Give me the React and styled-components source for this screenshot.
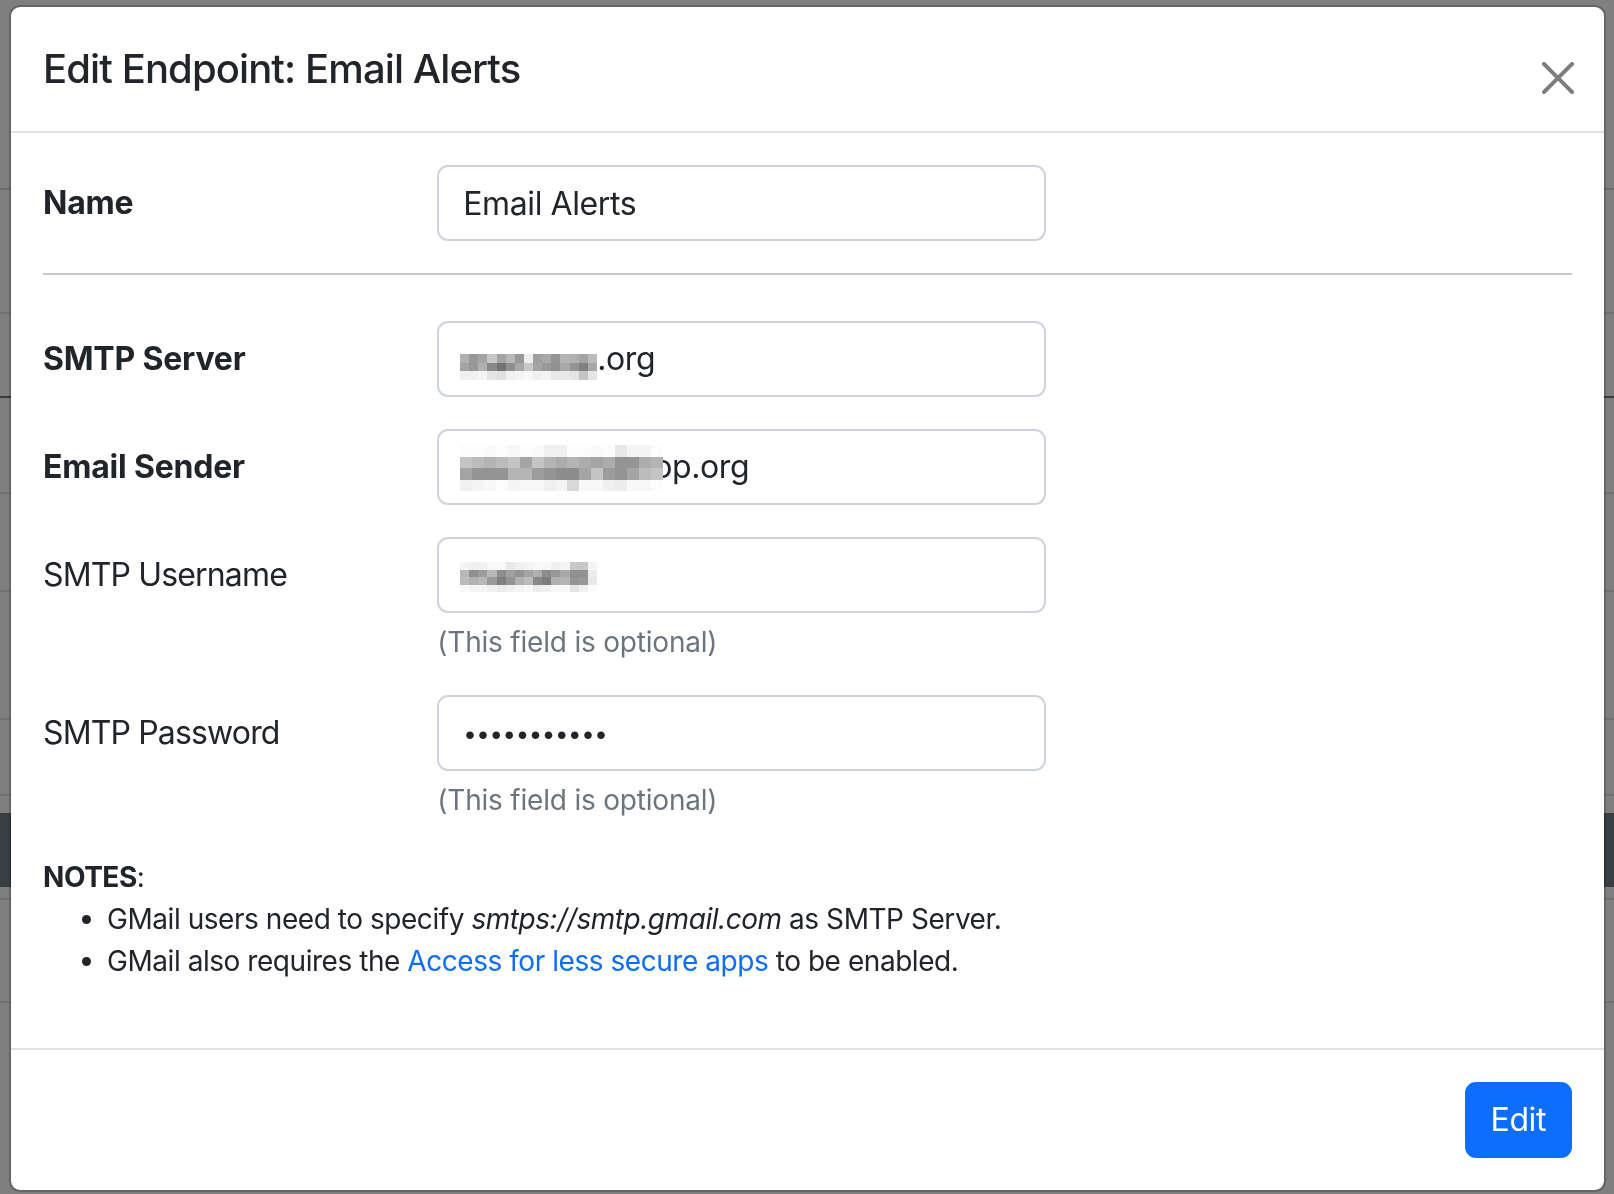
import React from "react";
import styled, { createGlobalStyle, css } from "styled-components";

const GlobalStyle = createGlobalStyle`
  * { box-sizing: border-box; }
  html, body { margin: 0; padding: 0; }
  body {
    font-family: Inter, "Noto Sans", "Liberation Sans", sans-serif;
    color: #212529;
    background: #fff;
  }
`;

// page that sits behind the modal backdrop
const BackPage = styled.div`
  min-height: 100vh;
  display: flex;
  flex-direction: column;
`;

const BackRow = styled.div`
  flex: none;
  height: ${({ $h }) => $h}px;
  border-bottom: 2px solid ${({ $line }) => $line || "transparent"};
  background: ${({ $fill }) => $fill || "transparent"};
`;

const Backdrop = styled.div`
  position: fixed;
  inset: 0;
  background: rgba(0, 0, 0, 0.5);
  padding: 5px 8px 4px 9px;
  overflow: auto;
`;

const Dialog = styled.div`
  display: flex;
  flex-direction: column;
  background: #fff;
  background-clip: padding-box;
  border: 2px solid rgba(0, 0, 0, 0.2);
  border-radius: 11px;
`;

const Header = styled.div`
  display: flex;
  align-items: flex-start;
  padding: 32px;
  border-bottom: 2px solid #dee2e6;
`;

const Title = styled.h5`
  margin: 0;
  font-size: 40px;
  font-weight: 500;
  line-height: 60px;
  letter-spacing: -0.9px;
  color: #212529;
`;

const CloseButton = styled.button`
  box-sizing: content-box;
  width: 32px;
  height: 32px;
  padding: 8px;
  margin: 15px -10px -3px auto;
  border: 0;
  background: transparent;
  opacity: 0.5;
  display: flex;
  align-items: center;
  justify-content: center;
  cursor: pointer;
`;

const Body = styled.div`
  padding: 32px;
`;

const Row = styled.div`
  display: grid;
  grid-template-columns: repeat(12, minmax(0, 1fr));
  column-gap: 48px;
  margin-bottom: ${({ $mb }) => ($mb === undefined ? 32 : $mb)}px;
`;

const Label = styled.label`
  grid-column: span 3;
  padding: 14px 0;
  font-size: 32px;
  line-height: 48px;
  font-weight: ${({ $required }) => ($required ? 700 : 400)};
  letter-spacing: ${({ $required }) => ($required ? "-0.2px" : "-0.85px")};
`;

const Control = styled.div`
  grid-column: span 5;
`;

const fieldStyles = css`
  display: block;
  width: 100%;
  height: 76px;
  padding: 12px 24px;
  font-family: inherit;
  font-size: 32px;
  line-height: 48px;
  letter-spacing: -0.4px;
  color: #212529;
  background: #fff;
  border: 2px solid #ced4da;
  border-radius: 11px;
  outline: none;
`;

const TextInput = styled.input`
  ${fieldStyles}
`;

const PasswordInput = styled.input.attrs({ type: "password" })`
  ${fieldStyles}
  font-size: 24px;
  letter-spacing: -0.4px;
`;

// field whose value is partly pixelated in the screenshot
const MaskedField = styled.div`
  ${fieldStyles}
  display: flex;
  align-items: flex-start;
  white-space: nowrap;
  overflow: hidden;
`;

const MosaicSvg = styled.svg`
  flex: none;
  position: relative;
  z-index: 1;
  margin-top: ${({ $top }) => $top}px;
  margin-left: -3px;
`;

const FieldTail = styled.span`
  margin-left: ${({ $shift }) => $shift || 0}px;
`;

const HelpText = styled.div`
  margin-top: 8px;
  font-size: 28px;
  line-height: 42px;
  letter-spacing: -0.2px;
  color: #6c757d;
`;

const Divider = styled.hr`
  margin: 32px 0 46px;
  border: 0;
  border-top: 2px solid #212529;
  opacity: 0.25;
`;

const Notes = styled.div`
  padding-top: 3px;
  font-size: 28px;
  line-height: 42px;
  letter-spacing: -0.45px;
`;

const NotesList = styled.ul`
  margin: 0 0 34px;
  padding-left: 64px;
`;

const Link = styled.a`
  color: #0d6efd;
  text-decoration: none;
`;

const Footer = styled.div`
  display: flex;
  justify-content: flex-end;
  align-items: center;
  padding: 24px;
  border-top: 2px solid #dee2e6;
`;

const PrimaryButton = styled.button`
  margin: 8px;
  padding: 12px 24px;
  font-family: inherit;
  font-size: 32px;
  line-height: 48px;
  letter-spacing: -0.4px;
  color: #fff;
  background: #0d6efd;
  border: 2px solid #0d6efd;
  border-radius: 11px;
  cursor: pointer;
`;

const Mosaic = ({ rows, width, height, top }) => {
  const grid = rows.map((r) => r.split(" "));
  const cols = grid[0].length;
  return (
    <MosaicSvg
      $top={top}
      width={width}
      height={height}
      viewBox={`0 0 ${cols} ${grid.length}`}
      preserveAspectRatio="none"
      shapeRendering="crispEdges"
    >
      {grid.map((row, y) =>
        row.map((v, x) => (
          <rect key={`${x}-${y}`} x={x} y={y} width="1.02" height="1.02" fill={`#${v}${v}${v}`} />
        ))
      )}
    </MosaicSvg>
  );
};

const serverMosaic = [
  "b0 98 a4 c8 a4 b8 98 ee a0 a8 94 b4 b0 a4 bc",
  "a4 98 b0 88 74 90 a8 c8 a4 98 90 a8 94 80 a8",
  "f0 f0 f4 e4 e0 f0 f4 f8 f0 f4 e8 e8 e4 c4 e4",
];

const senderMosaic = [
  "fc fc fa fc f8 fc fa f0 f0 fc fc fa fc e8 f4 f4 fc",
  "c4 bc b4 bc c4 a4 c4 b4 ac b4 ac a4 ac 94 94 ac b4",
  "a4 94 94 94 b4 b4 9c 94 8c 8c a4 c4 9c 94 a4 bc c4",
  "f0 f4 f8 fc f4 f8 f8 f0 f4 d8 f8 f8 f0 ec f8 f8 fc",
];

const userMosaic = [
  "f4 f0 f0 f8 f8 e8 f0 f4 f8 f8 f0 f4 c8 c8 f4",
  "b8 90 9c b8 8c a0 94 a4 b0 8c 98 a8 90 90 ec",
  "bc b0 b8 98 80 94 b0 bc 88 7c b0 b4 94 98 e8",
  "f8 f4 f4 f0 ec f0 f4 f8 ec f0 f8 f8 e4 f0 fc",
];

const backRows = [
  { h: 190, line: "#d6d6d6" },
  { h: 124, line: "#e4e4e4" },
  { h: 84, line: "#7a7a7a" },
  { h: 96, line: "#e4e4e4" },
  { h: 98, line: "#e4e4e4" },
  { h: 128, line: "#e4e4e4" },
  { h: 76, line: "#e4e4e4" },
  { h: 17 },
  { h: 74, fill: "#747e88" },
  { h: 13, line: "#e4e4e4" },
  { h: 103, line: "#e4e4e4" },
  { h: 200 },
];

export default function App() {
  return (
    <>
      <GlobalStyle />
      <BackPage>
        {backRows.map((r, i) => (
          <BackRow key={i} $h={r.h} $line={r.line} $fill={r.fill} />
        ))}
      </BackPage>
      <Backdrop>
        <Dialog>
          <Header>
            <Title>Edit Endpoint: Email Alerts</Title>
            <CloseButton aria-label="Close">
              <svg width="32" height="32" viewBox="0 0 16 16">
                <path
                  fill="#000"
                  d="M.293.293a1 1 0 0 1 1.414 0L8 6.586 14.293.293a1 1 0 1 1 1.414 1.414L9.414 8l6.293 6.293a1 1 0 0 1-1.414 1.414L8 9.414l-6.293 6.293a1 1 0 0 1-1.414-1.414L6.586 8 .293 1.707a1 1 0 0 1 0-1.414z"
                />
              </svg>
            </CloseButton>
          </Header>

          <Body>
            <Row $mb={0}>
              <Label $required>Name</Label>
              <Control>
                <TextInput type="text" defaultValue="Email Alerts" />
              </Control>
            </Row>

            <Divider />

            <Row>
              <Label $required>SMTP Server</Label>
              <Control>
                <MaskedField>
                  <Mosaic rows={serverMosaic} width={137} height={26} top={19} />
                  <FieldTail>.org</FieldTail>
                </MaskedField>
              </Control>
            </Row>

            <Row>
              <Label $required>Email Sender</Label>
              <Control>
                <MaskedField>
                  <Mosaic rows={senderMosaic} width={203} height={46} top={2} />
                  <FieldTail $shift={-10}>op.org</FieldTail>
                </MaskedField>
              </Control>
            </Row>

            <Row>
              <Label>SMTP Username</Label>
              <Control>
                <MaskedField>
                  <Mosaic rows={userMosaic} width={137} height={30} top={11} />
                </MaskedField>
                <HelpText>(This field is optional)</HelpText>
              </Control>
            </Row>

            <Row>
              <Label>SMTP Password</Label>
              <Control>
                <PasswordInput defaultValue="secretpass1" />
                <HelpText>(This field is optional)</HelpText>
              </Control>
            </Row>

            <Notes>
              <div>
                <b>NOTES</b>:
              </div>
              <NotesList>
                <li>
                  GMail users need to specify <em>smtps://smtp.gmail.com</em> as SMTP Server.
                </li>
                <li>
                  GMail also requires the <Link href="#">Access for less secure apps</Link> to be
                  enabled.
                </li>
              </NotesList>
            </Notes>
          </Body>

          <Footer>
            <PrimaryButton>Edit</PrimaryButton>
          </Footer>
        </Dialog>
      </Backdrop>
    </>
  );
}
